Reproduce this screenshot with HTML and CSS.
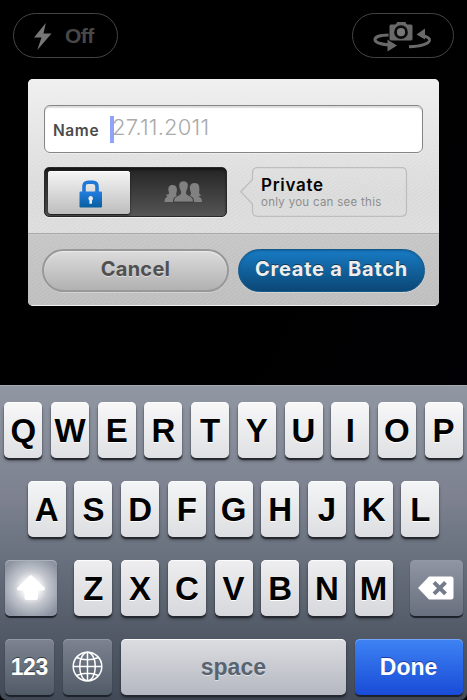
FILE: index.html
```html
<!DOCTYPE html>
<html lang="en">
<head>
<meta charset="utf-8">
<title>Create a Batch</title>
<link rel="stylesheet" href="styles.css">
</head>
<body>
<main class="screen">
  <header class="camera-bar">
    <div class="pill flash">
      <svg width="18" height="28" viewBox="0 0 18 28"><path d="M11.800 0 0 14.500h7.500L3.300 27 17.500 10.500H9.500z" fill="#777"/></svg>
      <span>Off</span>
    </div>
    <div class="pill flip">
      <svg width="62" height="32" viewBox="0 0 62 32">
        <path d="M17 14C8 14 3 16 3 18.500c0 3 6 5 15 5.500M50 14.500c5 1 8 2.500 7.500 5-.7 3-8 6-20.500 6.200" fill="none" stroke="#696969" stroke-width="3"/>
        <path d="M15.500 18.500 25 24.500 15.500 30.500zM53 7.500 44.500 13.500 53 18.500z" fill="#696969"/>
        <path d="M19 3h4.500L25 .500h8.500L35 3h4q2 0 2 2v13q0 2-2 2H19q-2 0-2-2V5q0-2 2-2z" fill="#696969" stroke="#000"/>
        <circle cx="29" cy="11.200" r="5.500" fill="#777" stroke="#0a0a0a" stroke-width="2.800"/>
      </svg>
    </div>
  </header>

  <section class="dialog">
    <div class="form">
      <div class="name-field"><label>Name</label><i class="caret"></i><span class="date">27.11.2011</span></div>
      <div class="privacy">
        <div class="toggle">
          <div class="thumb">
            <svg width="24" height="28" viewBox="0 0 24 28">
              <defs><linearGradient id="lock" x2="0" y2="1"><stop stop-color="#247de0"/><stop offset="1" stop-color="#085e9e"/></linearGradient></defs>
              <path d="M5 12V6.500Q5 2.200 9.300 2.200h4.400Q18 2.200 18 6.500V12" fill="none" stroke="#1e78d8" stroke-width="3.600"/>
              <rect x=".5" y="11.500" width="22.500" height="16" rx="1.300" fill="url(#lock)"/>
              <path d="M11.700 16a2.500 2.500 0 0 0-1.300 4.500v3.300h2.600v-3.300A2.500 2.500 0 0 0 11.700 16z" fill="#eee"/>
            </svg>
          </div>
          <div class="group">
            <svg width="38" height="23" viewBox="0 0 38 23">
              <g fill="#818181">
                <path d="M8.500 4C5 4 4.200 6.500 4.400 9c.1 2 1 2.500.6 3.500-.5 1.200-1.500 1-3 .9 0 1.300 1 1.600 1.700 2C1.500 16.500.5 17.500.5 21H9c0-4 1.500-4.500 4.500-6-2-.8-1.500-2-1-3.500C13.500 8 13 4 8.500 4zM30.500 2C26.500 2 25.500 5 26 8.500c.3 2.200 1.500 3.700 1 4.800-.3.700-1 1-1.500 1.400 3 1.300 4.500 2 4.500 6.300h8c0-3.500-1.500-4.500-3.500-5.500l3-1.500c-2.500-.5-2.500-1.800-2.200-4.500C35.700 5.500 35 2 30.500 2z"/>
                <path d="M19.500 0C15.800 0 14.500 2.500 15 6c.3 2.500 2 4 1.700 6.200-.3 2.800-7.200 1.800-7.200 8.800h20c0-7-6.800-6-7.100-8.800-.3-2.200 1.400-3.700 1.700-6.200.5-3.500-.9-6-4.600-6z" stroke="#383838" stroke-width=".8"/>
              </g>
            </svg>
          </div>
        </div>
        <div class="bubble">
          <svg class="outline" width="168" height="50" viewBox="0 0 168 50"><path d="M17.500.7h144q5 0 5 5v38.600q0 5-5 5h-144q-5 0-5-5V37L.8 24.700 12.500 12.500V5.700q0-5 5-5z"/></svg>
          <strong>Private</strong><small>only you can see this</small>
        </div>
      </div>
    </div>
    <footer class="actions">
      <div class="button cancel"><span>Cancel</span></div>
      <div class="button create"><span>Create a Batch</span></div>
    </footer>
  </section>

  <section class="keyboard">
    <div class="row"><b class="key">Q</b><b class="key">W</b><b class="key">E</b><b class="key">R</b><b class="key">T</b><b class="key">Y</b><b class="key">U</b><b class="key">I</b><b class="key">O</b><b class="key">P</b></div>
    <div class="row"><b class="key">A</b><b class="key">S</b><b class="key">D</b><b class="key">F</b><b class="key">G</b><b class="key">H</b><b class="key">J</b><b class="key">K</b><b class="key">L</b></div>
    <div class="row third">
      <div class="key shift"><svg width="30" height="26" viewBox="0 0 30 26"><path d="M13.500.8q1.300-1 2.600 0L28.500 12.500q1.500 2.500-1.500 3h-5V23q0 2-2 2h-9.500q-2 0-2-2v-7.500h-6q-2.500-.5-1-3z" fill="#fff"/></svg></div>
      <div class="letters"><b class="key">Z</b><b class="key">X</b><b class="key">C</b><b class="key">V</b><b class="key">B</b><b class="key">N</b><b class="key">M</b></div>
      <div class="key dark delete"><svg width="36" height="24" viewBox="0 0 36 24"><path d="M11 .5h22q2.500 0 2.500 2.500v18q0 2.500-2.500 2.500H11L.5 12.500v-1z" fill="#fff"/><path d="m16 6.300 11.500 11.500m0-11.500L16 17.800" stroke="#747c8b" stroke-width="4"/></svg></div>
    </div>
    <div class="row bottom">
      <b class="key dark num">123</b>
      <div class="key dark globe"><svg width="31" height="31" viewBox="0 0 31 31" fill="none" stroke="#fff" stroke-width="1.500"><circle cx="15.500" cy="15.500" r="14.300"/><ellipse cx="15.500" cy="15.500" rx="7.800" ry="14.300"/><path d="M15.500 1v29M1 15.500h29M4.500 6.500q11 4.500 22 0M4.500 24.500q11-4.500 22 0"/></svg></div>
      <b class="key space">space</b>
      <b class="key done">Done</b>
    </div>
  </section>
</main>
</body>
</html>
```
FILE: styles.css
```css
* { box-sizing: border-box; }
body { margin: 0; background: #000; }
svg { display: block; flex: none; }
.screen {
  width: 467px;
  height: 700px;
  overflow: hidden;
  display: flex;
  flex-direction: column;
  background: linear-gradient(120deg, #000 50%, #020208);
  font-family: Inter, "Liberation Sans", sans-serif;
}
.camera-bar {
  height: 79px;
  padding: 13px 13px 0;
  display: flex;
  justify-content: space-between;
}
.pill {
  height: 45px;
  border: 1.5px solid #444;
  border-radius: 23px;
  display: flex;
}
.flash {
  width: 105px;
  padding: 9px 0 0 20px;
  gap: 13px;
  color: #484848;
  font: bold 21px/26px "Liberation Sans", sans-serif;
  letter-spacing: -.6px;
}
.flip { width: 102px; padding: 7px 0 0 19px; }

.dialog {
  width: 411px;
  height: 227px;
  margin-left: 28px;
  border-radius: 5px;
  overflow: hidden;
  background: #ddd;
  display: flex;
  flex-direction: column;
}
.form {
  height: 154px;
  padding: 26px 16px 0;
  background:
    repeating-linear-gradient(145deg, rgba(255,255,255,.13) 0 1px, transparent 1px 3px),
    linear-gradient(#efefef, #dadada 75%, #dcdcdc);
}
.name-field {
  width: 379px;
  height: 48px;
  border: 1.5px solid #858585;
  border-radius: 6px;
  background: #fff;
  box-shadow: inset 0 2px 1px #ddd, 0 1px 0 #eee;
  display: flex;
  align-items: flex-start;
}
.name-field label {
  width: 57px;
  margin: 15px 0 0 8px;
  color: #4c4c4c;
  font-size: 15.5px;
  font-weight: 600;
  line-height: 20px;
  letter-spacing: .6px;
}
.caret { width: 4px; height: 27px; margin-top: 10px; background: #8ea4fb; }
.date {
  margin: 8px 0 0 -2px;
  color: #aaa;
  font-size: 22px;
  font-weight: 300;
  line-height: 26px;
  letter-spacing: .2px;
}
.privacy { display: flex; margin-top: 14px; }
.toggle {
  width: 183px;
  height: 50px;
  padding: 4px;
  border: 1px solid #292929;
  border-radius: 5px;
  background: linear-gradient(#242424, #555);
  box-shadow: inset 0 2px 2px #161616, 0 1px 0 #eee;
  display: flex;
}
.thumb {
  width: 82px;
  height: 43px;
  margin: -1px 0 0 -1px;
  padding: 9px 0 0 31px;
  border-radius: 3px;
  background: linear-gradient(#f6f6f6, #bdbdbd);
  box-shadow: 0 1px 2px #111, inset 0 1px #fff;
}
.group { padding: 9px 0 0 34px; }
.bubble {
  position: relative;
  width: 168px;
  height: 50px;
  margin-left: 13px;
  padding: 7px 0 0 21px;
  display: flex;
  flex-direction: column;
}
.outline { position: absolute; left: 0; top: 0; }
.outline path { fill: none; stroke: #bebebe; stroke-width: 1.300; }
.bubble strong {
  color: #050505;
  font-size: 17px;
  font-weight: 600;
  line-height: 22px;
  letter-spacing: .7px;
}
.bubble small { color: #8d8d8d; font-size: 11.500px; line-height: 13px; letter-spacing: .28px; white-space: nowrap; }
.actions {
  height: 73px;
  padding: 15px 14px 0;
  border-top: 1px solid #a9a9a9;
  border-bottom: 1px solid #eee;
  background:
    repeating-linear-gradient(145deg, rgba(255,255,255,.08) 0 1px, transparent 1px 3px),
    linear-gradient(#c6c6c6, #bebebe);
  box-shadow: inset 0 1px #ccc;
  display: flex;
  justify-content: space-between;
}
.button {
  width: 187px;
  height: 43px;
  border-radius: 22px;
  font-size: 20px;
  font-weight: 700;
  line-height: 38px;
  text-align: center;
}
.cancel {
  border: 2px solid #989898;
  color: #505050;
  background: linear-gradient(#dedede, #afafaf) border-box;
  text-shadow: 0 1px #ddd;
  box-shadow: inset 0 1px 1px #eaeaea, 0 1px #d3d3d3;
  letter-spacing: .25px;
  line-height: 36px;
}
.create {
  border: 1px solid #155989;
  color: #eee;
  background: linear-gradient(#187bc4, #0b4775);
  text-shadow: 0 -1px #153a56;
  box-shadow: inset 0 1px 2px #126099, 0 1px #d3d3d3;
  letter-spacing: .75px;
}

.keyboard {
  height: 315px;
  margin-top: auto;
  padding: 16px 4.500px 0;
  border-top: 1px solid #a6acb5;
  border-radius: 0 0 7px 7px;
  background: linear-gradient(#9097a2, #7c808f 37%, #6b7480 51%, #505965 80%, #414a56);
  display: flex;
  flex-direction: column;
  gap: 23px;
  font-family: "Liberation Sans", sans-serif;
}
.row { height: 56px; display: flex; justify-content: center; gap: 8.700px; }
.key {
  width: 38px;
  height: 56px;
  flex: none;
  border-radius: 5px;
  background: linear-gradient(#f8f8f9, #dfe0e3);
  box-shadow: 0 2px 1px #24272d, 0 3px 3px rgba(30,34,42,.5), inset 0 1px rgba(255,255,255,.8);
  color: #000;
  font-size: 33px;
  line-height: 57px;
  text-align: center;
  display: flex;
  justify-content: center;
  text-shadow: 0 1px #fff;
}
.row:nth-child(2) .key { background: linear-gradient(#f4f5f6, #dddee1); }
.letters { display: flex; gap: 8.700px; }
.letters .key { background: linear-gradient(#eeeef0, #d7d8dc); }
.third { justify-content: space-between; }
.key.shift {
  width: 52.500px;
  padding-top: 15px;
  background: radial-gradient(circle, #fff 18%, #c3c6ce 45%, #8d94a1 85%);
  box-shadow: 0 2px 1px #1c2028, inset 0 1px #acb2bc;
}
.key.dark {
  background: linear-gradient(#7d8390, #515b67);
  color: #fff;
  box-shadow: 0 2px 1px #1c2028, inset 0 1px #9299a5;
  text-shadow: 0 -1px #343b46;
}
.key.delete { width: 52.500px; padding: 16px 0 0; background: linear-gradient(#9096a2, #686f7e); }
.bottom { justify-content: flex-start; }
.key.num { width: 49.500px; font-size: 23px; line-height: 56px; letter-spacing: -.4px; }
.key.globe { width: 49.500px; padding-top: 12px; }
.key.space {
  width: 225px;
  color: #586370;
  background: linear-gradient(#dcdde1, #b5b8c1);
  font-size: 23px;
  line-height: 56px;
  text-shadow: 0 1px #dfe1e5;
}
.key.done {
  width: 108px;
  color: #fff;
  background: linear-gradient(#3e83f4, #194bd7);
  box-shadow: 0 2px 1px #1c2028, inset 0 1px #72a4f7;
  font-size: 23px;
  line-height: 56px;
  text-shadow: 0 -1px #1a3ca6;
}
```
